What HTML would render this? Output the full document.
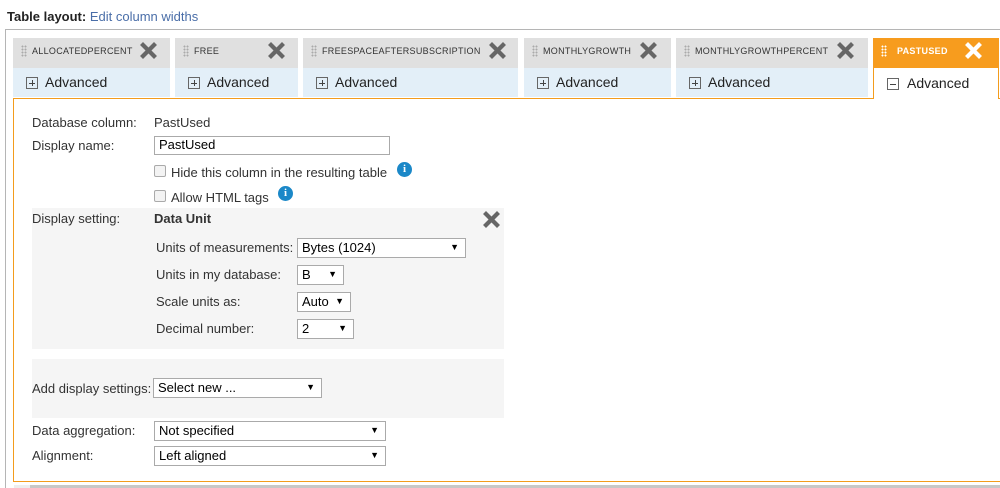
<!DOCTYPE html>
<html><head><style>
*{box-sizing:border-box}
html,body{margin:0;width:1000px;height:488px;overflow:hidden}
body{background:#fff;font-family:"Liberation Sans",Arial,sans-serif;font-size:13px;color:#333;position:relative}
.a{position:absolute}
.outer{left:5px;top:29px;width:1000px;height:470px;border:1px solid #b5b5b5;border-right:none}
.hd{height:30px;background:#e0e0e0;top:38px;font-size:9px;color:#333;letter-spacing:.3px}
.hd span.t{position:absolute;left:19px;top:8px}
.grip{position:absolute;left:8px;top:7px;width:6px;height:12px;background-image:radial-gradient(circle,#aaa 0.9px,transparent 1.1px);background-size:3px 3px}
.x{position:absolute;top:4px;width:17px;height:17px}
.bd{top:68px;height:29px;background:#e3eff8;font-size:14px;color:#222}
.bd span{position:absolute;left:32px;top:6px}
.pm{position:absolute;left:13px;top:9px;width:12px;height:12px;border:1px solid #666}
.pm:before{content:"";position:absolute;left:2px;top:4.5px;width:6px;height:1px;background:#444}
.pm.p:after{content:"";position:absolute;left:4.5px;top:2px;width:1px;height:6px;background:#444}
.ob{left:13px;top:98px;width:1000px;height:384px;border:1px solid #f39c1d;border-right:none}
.lbl{font-size:13px;color:#333}
.inp{border:1px solid #aaa;background:#fff;height:19px;font-size:13px;color:#000;padding:0 4px}
.sel{border:1px solid #aaa;background:#fff;height:20px;font-size:13px;color:#000;padding:1px 4px}
.sel:after{content:"▼";position:absolute;right:6px;top:3px;font-size:9px}
.cb{width:12px;height:12px;border:1px solid #aaa;border-radius:2px;background:#f3f3f3}
.info{width:15px;height:15px;border-radius:50%;background:#1b88c8;color:#fff;font-weight:bold;font-size:11px;text-align:center;line-height:15px;font-family:"Liberation Serif",serif}
</style></head><body>
<svg width="0" height="0" style="position:absolute"><defs><symbol id="xx" viewBox="0 0 17 17"><path d="M3 3L14 14M14 3L3 14" stroke="currentColor" stroke-width="4.2" stroke-linecap="square"/></symbol></defs></svg>
<div class="a" style="left:7px;top:9px;font-size:13px;color:#222"><b>Table layout:</b> <span style="color:#4a6ea8">Edit column widths</span></div>
<div class="a outer"></div>
<div class="a ob"></div>

<div class="a hd" style="left:13px;width:157px"><i class="grip"></i><span class="t">ALLOCATEDPERCENT</span><svg class="x" style="left:127px;color:#666"><use href="#xx"/></svg></div>
<div class="a bd" style="left:13px;width:157px"><i class="pm p"></i><span>Advanced</span></div>
<div class="a hd" style="left:175px;width:123px"><i class="grip"></i><span class="t">FREE</span><svg class="x" style="left:93px;color:#666"><use href="#xx"/></svg></div>
<div class="a bd" style="left:175px;width:123px"><i class="pm p"></i><span>Advanced</span></div>
<div class="a hd" style="left:303px;width:215px"><i class="grip"></i><span class="t">FREESPACEAFTERSUBSCRIPTION</span><svg class="x" style="left:186px;color:#666"><use href="#xx"/></svg></div>
<div class="a bd" style="left:303px;width:215px"><i class="pm p"></i><span>Advanced</span></div>
<div class="a hd" style="left:524px;width:147px"><i class="grip"></i><span class="t">MONTHLYGROWTH</span><svg class="x" style="left:116px;color:#666"><use href="#xx"/></svg></div>
<div class="a bd" style="left:524px;width:147px"><i class="pm p"></i><span>Advanced</span></div>
<div class="a hd" style="left:676px;width:192px"><i class="grip"></i><span class="t">MONTHLYGROWTHPERCENT</span><svg class="x" style="left:161px;color:#666"><use href="#xx"/></svg></div>
<div class="a bd" style="left:676px;width:192px"><i class="pm p"></i><span>Advanced</span></div>
<div class="a hd" style="left:873px;width:126px;background:#f79c1e;color:#fff;font-weight:bold"><i class="grip" style="background-image:radial-gradient(circle,#fff 0.9px,transparent 1.1px)"></i><span class="t" style="left:24px">PASTUSED</span><svg class="x" style="left:92px;color:#fff"><use href="#xx"/></svg></div>
<div class="a" style="left:873px;top:68px;width:126px;height:31px;background:#fff;border-left:1px solid #f39c1d;border-right:1px solid #f39c1d;font-size:14px;color:#222"><i class="pm" style="top:10px"></i><span style="position:absolute;left:33px;top:7px">Advanced</span></div>

<div class="a lbl" style="left:32px;top:115px">Database column:</div>
<div class="a lbl" style="left:154px;top:115px">PastUsed</div>
<div class="a lbl" style="left:32px;top:138px">Display name:</div>
<div class="a inp" style="left:154px;top:136px;width:236px">PastUsed</div>
<div class="a cb" style="left:154px;top:165px"></div>
<div class="a lbl" style="left:171px;top:165px">Hide this column in the resulting table</div>
<div class="a info" style="left:397px;top:162px">i</div>
<div class="a cb" style="left:154px;top:190px"></div>
<div class="a lbl" style="left:171px;top:190px">Allow HTML tags</div>
<div class="a info" style="left:278px;top:186px">i</div>

<div class="a" style="left:32px;top:208px;width:472px;height:141px;background:#f5f5f5"></div>
<div class="a lbl" style="left:32px;top:211px">Display setting:</div>
<div class="a lbl" style="left:154px;top:211px;font-weight:bold">Data Unit</div>
<svg class="a" style="left:483px;top:211px;width:17px;height:17px;color:#666"><use href="#xx"/></svg>
<div class="a lbl" style="left:156px;top:240px">Units of measurements:</div>
<div class="a sel" style="left:297px;top:238px;width:169px">Bytes (1024)</div>
<div class="a lbl" style="left:156px;top:267px">Units in my database:</div>
<div class="a sel" style="left:297px;top:265px;width:47px">B</div>
<div class="a lbl" style="left:156px;top:294px">Scale units as:</div>
<div class="a sel" style="left:297px;top:292px;width:54px">Auto</div>
<div class="a lbl" style="left:156px;top:321px">Decimal number:</div>
<div class="a sel" style="left:297px;top:319px;width:57px">2</div>

<div class="a" style="left:32px;top:359px;width:472px;height:59px;background:#f5f5f5"></div>
<div class="a lbl" style="left:32px;top:381px">Add display settings:</div>
<div class="a sel" style="left:153px;top:378px;width:169px">Select new ...</div>
<div class="a lbl" style="left:32px;top:423px">Data aggregation:</div>
<div class="a sel" style="left:154px;top:421px;width:232px">Not specified</div>
<div class="a lbl" style="left:32px;top:448px">Alignment:</div>
<div class="a sel" style="left:154px;top:446px;width:232px">Left aligned</div>

<div class="a" style="left:14px;top:485px;width:990px;height:5px;background:#eee"></div>
<div class="a" style="left:30px;top:485px;width:980px;height:5px;background:#c8c8c8"></div>
</body></html>
